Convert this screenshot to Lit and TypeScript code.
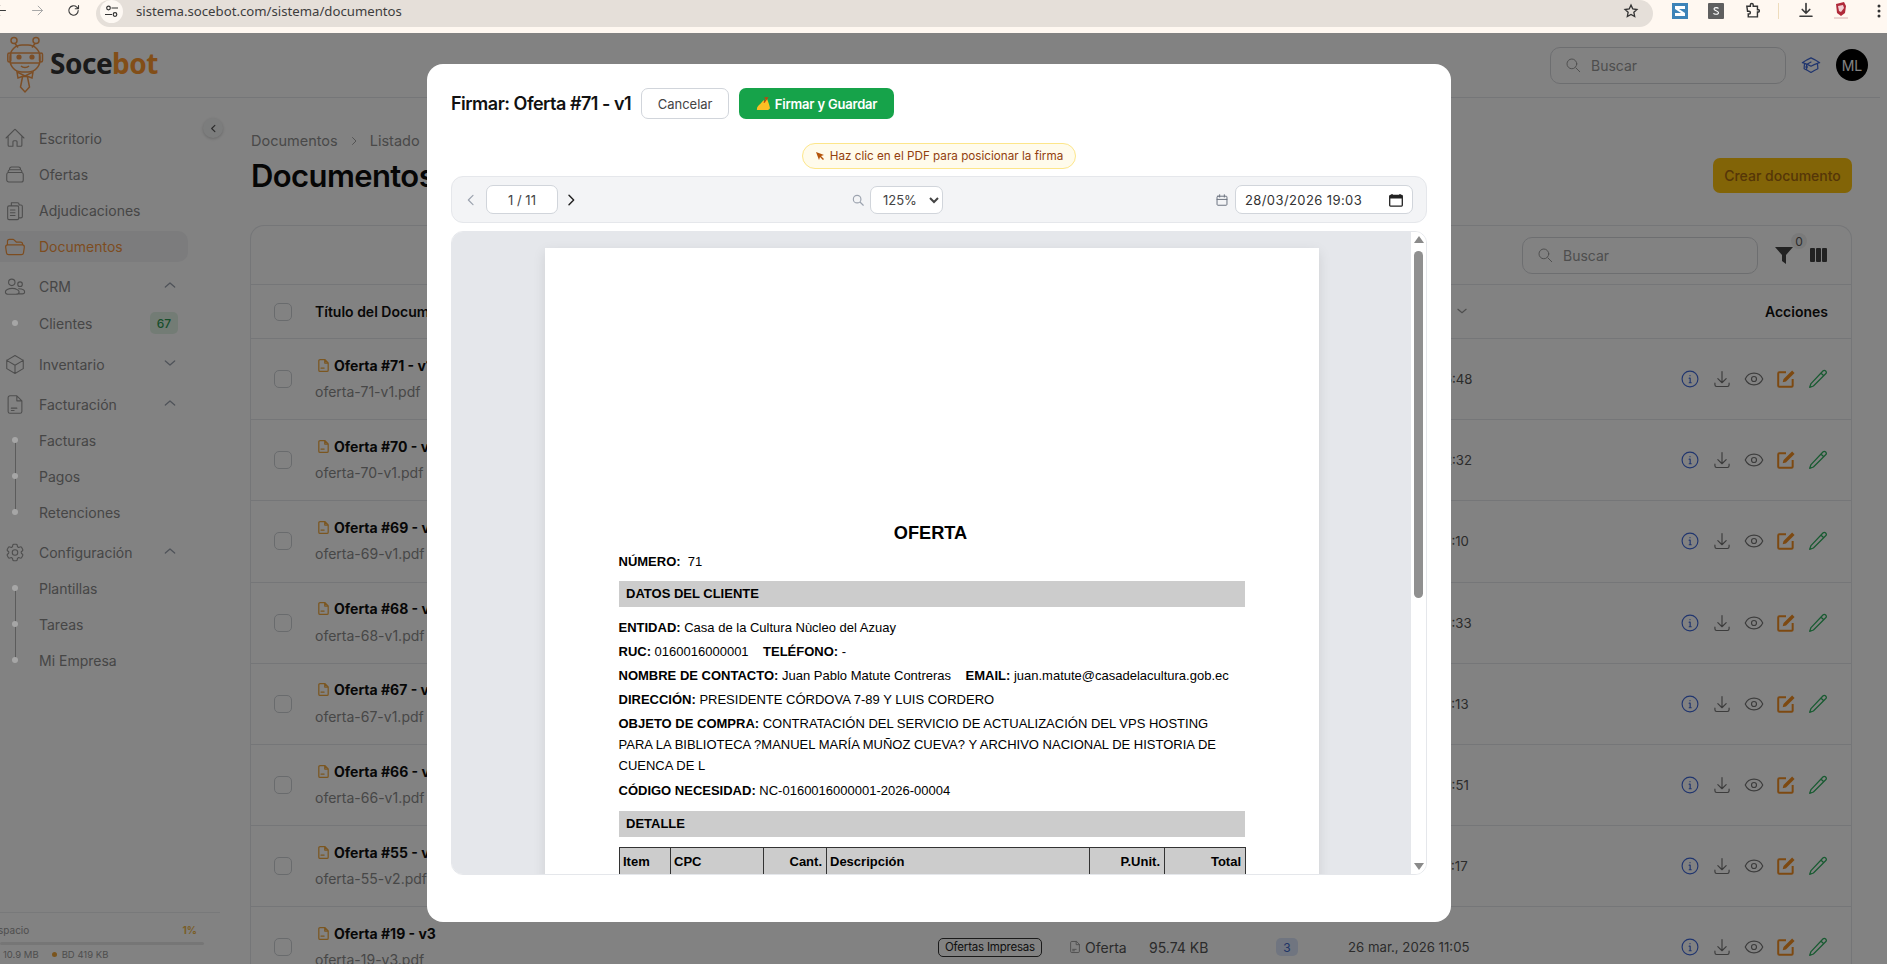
import { LitElement, html, css } from 'lit';
import { customElement } from 'lit/decorators.js';

const ic = (d: string, size = 24, sw = 1.5) => html`<svg width=${size} height=${size} viewBox="0 0 24 24" fill="none" stroke="currentColor" stroke-width=${sw} stroke-linecap="round" stroke-linejoin="round"><path d=${d}></path></svg>`;

const P = {
  home: 'M2.25 12l8.954-8.955c.44-.439 1.152-.439 1.591 0L21.75 12M4.5 9.75v10.125c0 .621.504 1.125 1.125 1.125H9.75v-4.875c0-.621.504-1.125 1.125-1.125h2.25c.621 0 1.125.504 1.125 1.125V21h4.125c.621 0 1.125-.504 1.125-1.125V9.75',
  stack: 'M6 6.878V6a2.25 2.25 0 012.25-2.25h7.5A2.25 2.25 0 0118 6v.878m-12 0c.235-.083.487-.128.75-.128h10.5c.263 0 .515.045.75.128m-12 0A2.25 2.25 0 004.5 9v.878m13.5-3A2.25 2.25 0 0119.5 9v.878m0 0a2.246 2.246 0 00-.75-.128H5.25c-.263 0-.515.045-.75.128m15 0A2.25 2.25 0 0121 12v6a2.25 2.25 0 01-2.25 2.25H5.25A2.25 2.25 0 013 18v-6c0-.98.626-1.813 1.5-2.122',
  clip: 'M8 3.5h6.5a2 2 0 012 2V6h2a1.5 1.5 0 011.5 1.5v11a1.5 1.5 0 01-1.5 1.5H16.5M5.5 7h9A1.5 1.5 0 0116 8.5v12a1.5 1.5 0 01-1.5 1.5h-9A1.5 1.5 0 014 20.500v-12A1.500 1.500 0 015.500 7zM7 11.500h5M7 14.500h5M7 17.500h5M8 3.500v3.500',
  folder: 'M3.75 9.776c.112-.017.227-.026.344-.026h15.812c.117 0 .232.009.344.026m-16.5 0a2.25 2.25 0 00-1.883 2.542l.857 6a2.25 2.25 0 002.227 1.932H19.05a2.25 2.25 0 002.227-1.932l.857-6a2.25 2.25 0 00-1.883-2.542m-16.5 0V6A2.25 2.25 0 016 3.750h3.879a1.500 1.500 0 011.060.440l2.122 2.120a1.500 1.500 0 001.060.440H18A2.250 2.250 0 0120.250 9v.776',
  users: 'M8.500 4a3.500 3.500 0 100 7 3.500 3.500 0 000-7zM17.500 7a2.500 2.500 0 100 5 2.500 2.500 0 000-5zM5.500 20.500h7.500c2 0 3.500-1 3.500-2.500s-3-4-7.500-4-7.500 2-7.500 4 1.500 2.500 4 2.500zM16.500 20h3.500c1.500 0 2.500-.8 2.500-2 0-1.700-2.200-3.500-6.500-3.500',
  cube: 'M21 7.500l-9-5.250L3 7.500m18 0l-9 5.250m9-5.250v9l-9 5.250M3 7.500l9 5.250M3 7.500v9l9 5.250m0-9v9',
  doc: 'M14 2.500H6.500A2 2 0 004.500 4.500v15a2 2 0 002 2h11a2 2 0 002-2V8zM14 2.500V8h5.500M8 16h6M8 18.500h3',
  cog: 'M9.594 3.940c.090-.542.560-.940 1.110-.940h2.593c.550 0 1.020.398 1.110.940l.213 1.281c.063.374.313.686.645.870.074.040.147.083.220.127.324.196.720.257 1.075.124l1.217-.456a1.125 1.125 0 011.370.490l1.296 2.247a1.125 1.125 0 01-.260 1.431l-1.003.827c-.293.240-.438.613-.431.992a6.759 6.759 0 010 .255c-.007.378.138.750.430.990l1.005.828c.424.350.534.954.260 1.430l-1.298 2.247a1.125 1.125 0 01-1.369.491l-1.217-.456c-.355-.133-.750-.072-1.076.124a6.570 6.570 0 01-.220.128c-.331.183-.581.495-.644.869l-.213 1.280c-.090.543-.560.941-1.110.941h-2.594c-.550 0-1.020-.398-1.110-.940l-.213-1.281c-.062-.374-.312-.686-.644-.870a6.520 6.520 0 01-.220-.127c-.325-.196-.720-.257-1.076-.124l-1.217.456a1.125 1.125 0 01-1.369-.490l-1.297-2.247a1.125 1.125 0 01.260-1.431l1.004-.827c.292-.240.437-.613.430-.992a6.932 6.932 0 010-.255c.007-.378-.138-.750-.430-.990l-1.004-.828a1.125 1.125 0 01-.260-1.430l1.297-2.247a1.125 1.125 0 011.370-.491l1.216.456c.356.133.751.072 1.076-.124.072-.044.146-.087.220-.128.332-.183.582-.495.644-.869l.214-1.281zM15 12a3 3 0 11-6 0 3 3 0 016 0z',
  up: 'M5 15l7-6 7 6',
  down: 'M5 9l7 6 7-6',
  left: 'M15 5l-7 7 7 7',
  right: 'M9 5l7 7-7 7',
  search: 'M21 21l-5.200-5.200M17 10.500a6.500 6.500 0 11-13 0 6.500 6.500 0 0113 0z',
  cap: 'M4.260 10.150a60 60 0 00-.490 6.350A48.600 48.600 0 0112 20.900a48.600 48.600 0 018.230-4.400 60 60 0 00-.490-6.350m-15.480 0a50.600 50.600 0 00-2.660-.900A59.900 59.900 0 0112 3.500a59.900 59.900 0 0110.400 5.750c-.900.270-1.780.570-2.660.900m-15.480 0A50.700 50.700 0 0112 13.490a50.700 50.700 0 017.740-3.340M6.750 15a.750.750 0 100-1.500.750.750 0 000 1.500zm0 0v-3.680A55.400 55.400 0 0112 8.440m-5.250 9.060v-1.500',
  info: 'M12 2.500a9.500 9.500 0 100 19 9.500 9.500 0 000-19zM11 11h1.200v5.500M11 16.500h2.500M12 7.800v.2',
  download: 'M12 3v13M7 11.500l5 5 5-5M3.500 17v2a2 2 0 002 2h13a2 2 0 002-2v-2',
  eye: 'M1.500 12C3.500 7.500 7.500 5 12 5s8.500 2.500 10.500 7c-2 4.500-6 7-10.500 7S3.500 16.500 1.500 12zM15 12a3 3 0 11-6 0 3 3 0 016 0z',
  pencil: 'M17.900 2.400a2.300 2.300 0 013.300 3.300L6.500 20.400 2 22l1.600-4.500zM15.500 4.800l3.300 3.300',
  cal: 'M5 5.500h14a1.500 1.500 0 011.500 1.500v12.500A1.500 1.500 0 0119 21H5a1.500 1.500 0 01-1.500-1.500V7A1.500 1.500 0 015 5.500zM8 3v4M16 3v4M3.500 11h17',
  star: 'M12 3.200l2.700 5.700 6.200.800-4.600 4.300 1.200 6.200L12 17.100l-5.500 3.100 1.200-6.200-4.600-4.300 6.200-.800z',
  reload: 'M19.500 12a7.500 7.500 0 11-2.300-5.400L20 9.200M20 4v5.200h-5.200',
};

const DOCS = [
  ['Oferta #71 - v1', 'oferta-71-v1.pdf', '97.21 KB', '1', '28 mar., 2026 15:48'],
  ['Oferta #70 - v1', 'oferta-70-v1.pdf', '96.08 KB', '2', '28 mar., 2026 12:32'],
  ['Oferta #69 - v1', 'oferta-69-v1.pdf', '95.12 KB', '1', '27 mar., 2026 18:10'],
  ['Oferta #68 - v1', 'oferta-68-v1.pdf', '95.40 KB', '2', '27 mar., 2026 16:33'],
  ['Oferta #67 - v1', 'oferta-67-v1.pdf', '96.51 KB', '1', '27 mar., 2026 12:13'],
  ['Oferta #66 - v1', 'oferta-66-v1.pdf', '95.77 KB', '1', '27 mar., 2026 10:51'],
  ['Oferta #55 - v2', 'oferta-55-v2.pdf', '94.90 KB', '2', '26 mar., 2026 17:17'],
  ['Oferta #19 - v3', 'oferta-19-v3.pdf', '95.74 KB', '3', '26 mar., 2026 11:05'],
];

@customElement('app-root')
export class AppRoot extends LitElement {
  static styles = css`
    :host { display: block; width: 1887px; height: 964px; overflow: hidden; font-family: Inter, sans-serif; color: #111; background: #fff; }
    .chrome { height: 33px; background: #fff8f1; display: flex; align-items: flex-start; color: #3b3b3b; }
    .chrome .nav-ic { display: flex; align-items: center; height: 21px; }
    .url { margin-left: 15px; width: 1557px; height: 27px; background: #e5dfd9; border-radius: 0 14px 14px 14px; border-top-left-radius: 14px; display: flex; align-items: center; padding-left: 4px; box-sizing: border-box; }
    .url .tune { width: 23px; height: 23px; border-radius: 50%; background: #fdf8f3; display: flex; align-items: center; justify-content: center; margin-top: -4px; }
    .url span { margin-left: 9px; font: 13.2px 'Noto Sans', sans-serif; color: #3d3d3d; margin-top: -5px; padding-left: 4px; }
    .url .grow { flex: 1; }
    .url svg.st { margin-right: 14px; margin-top: -5px; }
    .ext { display: flex; align-items: center; height: 21px; }
    .ext-s { width: 16px; height: 16px; }
    .app { position: relative; display: flex; height: 931px; overflow: hidden; }
    .overlay { position: absolute; inset: 0; background: rgba(0,0,0,.49); padding: 31px 0 0 427px; }

    aside { width: 250px; flex: none; height: 931px; display: flex; flex-direction: column; overflow: hidden; position: relative; }
    .logo { height: 65px; flex: none; box-sizing: border-box; border-bottom: 1px solid #e5e7eb; display: flex; align-items: flex-start; position: relative; }
    .logo svg { margin: 3px 0 0 7px; }
    .logo b { font: 700 28px/38px 'Noto Sans', sans-serif; letter-spacing: -.5px; margin: 11px 0 0 3px; color: #333; }
    .logo b i { font-style: normal; color: #ff9a30; }
    nav { padding-top: 22px; display: flex; flex-direction: column; }
    .item { height: 36px; display: flex; align-items: center; font-size: 14px; color: #8a8a8a; padding-left: 4px; width: 188px; box-sizing: border-box; position: relative; }
    .item .i { width: 22px; height: 24px; display: flex; justify-content: center; align-items: center; margin-right: 13px; color: #999; }
    .item.act { color: #f6963f; background: #f3f4f6; border-radius: 0 10px 10px 0; height: 31px; margin: 3px 0 2px; }
    .item.act .i { color: #f6963f; }
    .item .chev { position: absolute; right: 10px; top: 9px; color: #9ca3af; }
    .group { margin-top: 4px; }
    .sub { position: relative; }
    .sub .item .dot { width: 6px; height: 6px; border-radius: 50%; background: #a6a6a6; margin: 0 21px 0 8px; flex: none; z-index: 1; }
    .sub.line::before { content: ''; position: absolute; left: 15px; top: 18px; bottom: 18px; width: 1px; background: #b5b5b5; }
    .badge67 { position: absolute; right: 10px; top: 7px; height: 22px; width: 28px; border-radius: 5px; background: #e2f4e6; color: #2f9a55; font-size: 12px; font-weight: 500; display: flex; align-items: center; justify-content: center; }
    .collapse { position: absolute; left: 203px; top: 85px; width: 20px; height: 20px; border-radius: 50%; background: #f4f5f6; box-shadow: 0 1px 3px rgba(0,0,0,.2); display: flex; align-items: center; justify-content: center; color: #555; }
    .storage { margin-top: auto; height: 52px; flex: none; width: 220px; border-top: 1px solid #eceef0; box-sizing: border-box; padding-top: 11px; overflow: hidden; font-size: 10px; color: #9a9a9a; }
    .storage .r { display: flex; justify-content: space-between; width: 205px; margin-left: -8px; box-sizing: border-box; padding-left: 0; }
    .storage .r b { color: #f0b84a; font-weight: 700; }
    .storage .bar { height: 3px; width: 204px; background: #e8e8e8; margin-top: 6px; border-radius: 2px; }
    .storage .s { display: flex; align-items: center; margin-top: 4px; padding-left: 3px; color: #999; font-size: 9.5px; }
    .storage .s i { width: 5px; height: 5px; border-radius: 50%; background: #f0a63a; margin: 0 5px 0 13px; }

    main { flex: 1; display: flex; flex-direction: column; padding-right: 35px; min-width: 0; }
    .top { height: 65px; flex: none; box-sizing: border-box; border-bottom: 1px solid #e5e7eb; display: flex; align-items: center; justify-content: flex-end; margin-right: -28px; padding-right: 12px; }
    .search { width: 236px; height: 37px; border: 1px solid #d6d8dc; border-radius: 10px; box-sizing: border-box; display: flex; align-items: center; padding-left: 13px; color: #9a9a9a; font-size: 14px; gap: 9px; }
    .top .cap { margin: 0 0 0 15px; color: #3f68d8; display: flex; }
    .avatar { width: 32px; height: 32px; border-radius: 50%; background: #000; color: #fff; font-size: 14px; display: flex; align-items: center; justify-content: center; margin-left: 15px; }
    .crumb { margin-top: 34px; font-size: 14.5px; color: #8f8f8f; display: flex; align-items: center; gap: 10px; height: 20px; margin-left: 1px; }
    .head { display: flex; justify-content: space-between; align-items: center; margin-top: 8px; height: 44px; margin-left: 1px; }
    h1 { margin: 0; font-size: 31px; font-weight: 600; letter-spacing: -.6px; color: #0d0d0d; }
    .create { height: 35px; width: 139px; border-radius: 7px; background: #ffc40f; color: #a86a10; font-size: 14px; font-weight: 500; display: flex; align-items: center; justify-content: center; }
    .card { margin-top: 31px; border: 1px solid #e5e7eb; border-bottom: 0; border-radius: 14px 14px 0 0; }
    .tools { height: 59px; box-sizing: border-box; display: flex; align-items: center; justify-content: flex-end; border-bottom: 1px solid #e5e7eb; padding-right: 24px; position: relative; }
    .tools .fil { margin-left: 17px; color: #444; display: flex; }
    .tools .cols { margin-left: 17px; display: flex; gap: 1px; }
    .tools .cols i { width: 5px; height: 14px; background: #444; border-radius: 1px; }
    .tools .zero { position: absolute; right: 44px; top: 7px; width: 16px; height: 16px; border-radius: 50%; background: #f0f0f0; color: #555; font-size: 12px; display: flex; align-items: center; justify-content: center; }
    .row { display: grid; grid-template-columns: 64px 623px 130px 81px 125px 74px 1fr auto; align-items: center; border-bottom: 1px solid #e5e7eb; height: 81.200px; box-sizing: border-box; font-size: 14px; color: #6b6b6b; }
    .row.hd { height: 54px; color: #111; font-weight: 600; font-size: 14px; }
    .cb { width: 18px; height: 18px; border: 1px solid #cfd2d6; border-radius: 5px; box-sizing: border-box; margin-left: 23px; background: #fff; }
    .ttl { display: flex; align-items: center; gap: 3px; color: #0e0e0e; font-weight: 700; font-size: 14px; height: 20px; padding-left: 1px; }
    .ttl svg { color: #f2a93f; }
    .fn { color: #8c8c8c; margin-top: 7px; height: 20px; font-size: 14px; line-height: 20px; }
    .cell-t { margin-top: -1px; }
    .tag { justify-self: start; border: 1px solid #333; border-radius: 5px; color: #222; font-size: 11.5px; height: 17px; padding: 0 6px; display: flex; align-items: center; letter-spacing: -.2px; }
    .type { display: flex; align-items: center; gap: 3px; color: #555; }
    .type svg { color: #999; }
    .size { color: #555; }
    .count { width: 22px; height: 18px; background: #dbe6fb; color: #3e68c8; border-radius: 5px; font-size: 12px; display: flex; align-items: center; justify-content: center; margin-left: 2px; }
    .date { color: #555; font-size: 13.2px; }
    .acts { display: flex; gap: 12px; padding-right: 23px; align-items: center; }
    .hd .acts { justify-self: end; font-weight: 600; color: #111; gap: 0; }
    .c-i { color: #3f68d8; display: flex; }
    .c-d, .c-e { color: #777; display: flex; }
    .c-o { color: #f59023; display: flex; }
    .c-g { color: #2fb160; display: flex; }

    .modal { width: 1024px; height: 858px; background: #fff; border-radius: 16px; box-sizing: border-box; padding: 24px 24px 0; display: flex; flex-direction: column; }
    .m-h { display: flex; align-items: center; height: 31px; gap: 10px; }
    .m-h h2 { margin: 0; font-size: 18px; font-weight: 600; letter-spacing: -.5px; color: #111; }
    .btn { height: 31px; border-radius: 7px; box-sizing: border-box; font-size: 13px; display: flex; align-items: center; justify-content: center; }
    .cancel { width: 88px; border: 1px solid #d1d5db; color: #444; }
    .save { width: 155px; background: #16a34a; color: #fff; font-weight: 600; gap: 4px; letter-spacing: -.2px; }
    .hint-w { display: flex; justify-content: center; margin-top: 24px; height: 26px; }
    .hint { background: #fffbeb; border: 1px solid #fde68a; border-radius: 13px; box-sizing: border-box; height: 26px; width: 274px; display: flex; align-items: center; justify-content: center; gap: 5px; font-size: 11.700px; color: #92400e; }
    .pt { margin-top: 7px; height: 47px; background: #f3f4f6; border: 1px solid #e5e7eb; border-radius: 12px; box-sizing: border-box; display: flex; align-items: center; justify-content: space-between; padding: 0 13px 0 11px; }
    .pt .g { display: flex; align-items: center; }
    .pg { width: 72px; height: 29px; background: #fff; border: 1px solid #d1d5db; border-radius: 7px; box-sizing: border-box; display: flex; align-items: center; justify-content: center; font-size: 13px; color: #444; margin: 0 5px 0 7px; }
    select { width: 73px; height: 28px; border: 1px solid #d1d5db; border-radius: 7px; background: #fff; font: 13px Inter, sans-serif; color: #444; margin-left: 5px; padding-left: 8px; }
    .dt { width: 178px; height: 29px; background: #fff; border: 1px solid #d1d5db; border-radius: 7px; box-sizing: border-box; display: flex; align-items: center; justify-content: space-between; padding: 0 9px; font-size: 13px; letter-spacing: .4px; color: #333; margin-left: 6px; }
    .pdf { margin-top: 8px; height: 644px; flex: none; border: 1px solid #e5e7eb; border-radius: 12px; overflow: hidden; display: flex; box-sizing: border-box; }
    .scroll { flex: 1; background: #e5e7eb; overflow: hidden; padding-top: 16px; display: flex; justify-content: center; }
    .sb { width: 15px; background: #fff; display: flex; flex-direction: column; align-items: center; padding: 4px 0; box-sizing: border-box; flex: none; }
    .sb .th { width: 9px; height: 347px; background: #909090; border-radius: 5px; margin-top: 8px; }
    .sb .ar { width: 0; height: 0; border-left: 5px solid transparent; border-right: 5px solid transparent; }
    .sb .ar.u { border-bottom: 7px solid #8a8a8a; }
    .sb .ar.d { border-top: 7px solid #8a8a8a; margin-top: auto; }
    .page { width: 774px; height: 1000px; flex: none; background: #fff; box-sizing: border-box; padding: 274px 74px 0; font: 13px/18px 'Liberation Sans', Arial, sans-serif; color: #000; box-shadow: 0 4px 12px rgba(0,0,0,.1); }
    .page h3 { margin: 0; font-size: 18.200px; line-height: 22px; text-align: center; font-weight: 700; padding-right: 2px; }
    .page p { margin: 0; white-space: nowrap; }
    .page .num { margin-top: 9px; line-height: 18px; }
    .sec { background: #ccc; height: 26px; line-height: 26px; font-weight: 700; padding-left: 7.500px; }
    .sec.a { margin-top: 10px; }
    .lines { margin-top: 12px; display: flex; flex-direction: column; gap: 6px; }
    .obj { line-height: 21px; margin-top: -2px; }
    .sec.b { margin-top: 11px; }
    .sec + table { margin-top: 10px; }
    table { border-collapse: collapse; width: 626px; table-layout: fixed; font-weight: 700; background: #ccc; }
    td { border: 1px solid #333; height: 28px; padding: 0 3.500px; box-sizing: border-box; }
    td.r { text-align: right; }
  `;

  renderLogo() {
    return html`<svg width="40" height="58" viewBox="0 0 40 58" fill="none" stroke="#f49a4c" stroke-width="1.500">
      <circle cx="7" cy="4.500" r="3"></circle><circle cx="29" cy="4.500" r="3"></circle>
      <path d="M8 7.500l3 4M28 7.500l-3 4"></path>
      <rect x="3" y="9" width="30" height="27" rx="12"></rect>
      <rect x="0.800" y="17" width="3" height="9" rx="1.500"></rect><rect x="32.500" y="17" width="3" height="9" rx="1.500"></rect>
      <path d="M4 17h28M4 27h28"></path>
      <circle cx="12" cy="21" r="2.600" fill="#f49a4c" stroke="none"></circle><circle cx="25" cy="21" r="2.600" fill="#f49a4c" stroke="none"></circle>
      <path d="M14 30c2 2 6 2 8 0"></path>
      <path d="M10 36l8 4 8-4-1 6-4-1.500h-6L11 42zM15.500 41l-2 10 4.500 5 4.500-5-2-10"></path>
    </svg>`;
  }

  renderHand() {
    return html`<svg width="15" height="14" viewBox="0 0 16 15"><path d="M1 14c-.5-3 1.500-5 3.500-6.500L8 3.500l1.500 1 1-2.500 1.500.500L14 8l1 4-2 2z" fill="#fbbf24"></path><path d="M9 1l3 0-3.500 5" stroke="#c2410c" stroke-width="1.400" fill="none"></path></svg>`;
  }

  renderRow(d: string[]) {
    return html`<div class="row">
      <div class="cb"></div>
      <div class="cell-t">
        <div class="ttl">${ic('M14 2.500H6.500a2 2 0 00-2 2v15a2 2 0 002 2h11a2 2 0 002-2V8zM14 2.500V8h5.500M8 16h5', 15, 2)}${d[0]}</div>
        <div class="fn">${d[1]}</div>
      </div>
      <div class="tag">Ofertas Impresas</div>
      <div class="type">${ic(P.doc, 14, 1.600)}Oferta</div>
      <div class="size">${d[2]}</div>
      <div class="count">${d[3]}</div>
      <div class="date">${d[4]}</div>
      <div class="acts">
        <span class="c-i">${ic(P.info, 20, 1.400)}</span>
        <span class="c-d">${ic(P.download, 20, 1.400)}</span>
        <span class="c-e">${ic(P.eye, 20, 1.400)}</span>
        <span class="c-o"><svg width="20" height="20" viewBox="0 0 18 18" fill="none"><path d="M9 3H3a1 1 0 00-1 1v11a1 1 0 001 1h11a1 1 0 001-1V9" stroke="currentColor" stroke-width="1.800"></path><path d="M6 12l.800-3L14.500 1.300l2.200 2.200L9 11.200z" fill="currentColor"></path></svg></span>
        <span class="c-g">${ic(P.pencil, 20, 1.500)}</span>
      </div>
    </div>`;
  }

  render() {
    const sub = (t: string) => html`<div class="item"><i class="dot"></i>${t}</div>`;
    return html`
      <div class="chrome">
        <span class="nav-ic" style="margin-left:-7px">${ic('M20 12H4M11 5l-7 7 7 7', 15, 1.600)}</span>
        <span class="nav-ic" style="margin-left:22px;color:#a8a8a8">${ic('M4 12h16M13 5l7 7-7 7', 15, 1.600)}</span>
        <span class="nav-ic" style="margin-left:21px">${ic(P.reload, 15, 1.800)}</span>
        <div class="url">
          <div class="tune"><svg width="13" height="13" viewBox="0 0 13 13" fill="none" stroke="#333" stroke-width="1.200"><circle cx="3.500" cy="3" r="1.800"></circle><path d="M6.500 3H13M0 9.500h7"></path><circle cx="10" cy="9.500" r="1.800"></circle></svg></div>
          <span>sistema.socebot.com/sistema/documentos</span>
          <div class="grow"></div>
          <svg class="st" width="16" height="16" viewBox="0 0 24 24" fill="none" stroke="#333" stroke-width="2"><path d=${P.star}></path></svg>
        </div>
        <div class="ext" style="margin-left:19px"><svg class="ext-s" viewBox="0 0 16 16"><rect width="16" height="16" fill="#3d83b8"></rect><path d="M3 3h10v3H7l6 4v3H3v-3h6L3 6z" fill="#fff"></path></svg></div>
        <div class="ext" style="margin-left:20px"><svg class="ext-s" viewBox="0 0 16 16"><rect width="16" height="16" rx="1" fill="#5f5f5f"></rect><path d="M10.500 5.500C10 4.500 6 4 6 6c0 2 4.500 1.500 4.500 3.800 0 2-4.500 1.800-5 .500" stroke="#fff" stroke-width="1.100" fill="none"></path></svg></div>
        <div class="ext" style="margin-left:20px"><svg width="17" height="17" viewBox="0 0 24 24" fill="none" stroke="#333" stroke-width="2"><path d="M4 6h5V4a2 2 0 014 0v2h6v5h2a2 2 0 010 3h-2v7H6v-4h1a2 2 0 000-4H5z"></path></svg></div>
        <div class="ext" style="margin-left:17px"><i style="width:1px;height:16px;background:#eedcbc;display:block"></i></div>
        <div class="ext" style="margin-left:18px">${ic('M12 2v13M7 10l5 5 5-5M4 19h16', 18, 2.200)}</div>
        <div class="ext" style="margin-left:17px"><svg width="18" height="19" viewBox="0 0 18 19"><path d="M4 3l8-2 2 4-1 7-4 3-4-3z" fill="#b02a3a"></path><path d="M6 5l5-1 1 3-3 4-2-1z" fill="#f2d0d4"></path><path d="M2 17h14" stroke="#d8b0b0" stroke-width="1"></path></svg></div>
        <div class="ext" style="margin-left:27px"><svg width="4" height="14" viewBox="0 0 4 14" fill="#333"><circle cx="2" cy="2" r="1.500"></circle><circle cx="2" cy="7" r="1.500"></circle><circle cx="2" cy="12" r="1.500"></circle></svg></div>
      </div>
      <div class="app">
        <aside>
          <div class="logo">${this.renderLogo()}<b>Soce<i>bot</i></b></div>
          <div class="collapse">${ic(P.left, 11, 2.500)}</div>
          <nav>
            <div class="item"><span class="i">${ic(P.home, 22, 1.200)}</span>Escritorio</div>
            <div class="item"><span class="i">${ic(P.stack, 23, 1.200)}</span>Ofertas</div>
            <div class="item"><span class="i">${ic(P.clip, 23, 1.200)}</span>Adjudicaciones</div>
            <div class="item act"><span class="i">${ic(P.folder, 24, 1.300)}</span>Documentos</div>
            <div class="group"><div class="item"><span class="i">${ic(P.users, 23, 1.200)}</span>CRM<span class="chev">${ic(P.up, 16, 2)}</span></div>
              <div class="sub" style="margin:1px 0"><div class="item"><i class="dot"></i>Clientes<span class="badge67">67</span></div></div></div>
            <div class="group"><div class="item"><span class="i">${ic(P.cube, 23, 1.200)}</span>Inventario<span class="chev">${ic(P.down, 16, 2)}</span></div></div>
            <div class="group"><div class="item"><span class="i">${ic(P.doc, 23, 1.200)}</span>Facturación<span class="chev">${ic(P.up, 16, 2)}</span></div>
              <div class="sub line">${sub('Facturas')}${sub('Pagos')}${sub('Retenciones')}</div></div>
            <div class="group"><div class="item"><span class="i">${ic(P.cog, 23, 1.200)}</span>Configuración<span class="chev">${ic(P.up, 16, 2)}</span></div>
              <div class="sub line">${sub('Plantillas')}${sub('Tareas')}${sub('Mi Empresa')}</div></div>
          </nav>
          <div class="storage">
            <div class="r"><span>Espacio</span><b>1%</b></div>
            <div class="bar"></div>
            <div class="s">10.9 MB<i></i>BD 419 KB</div>
          </div>
        </aside>
        <main>
          <div class="top">
            <div class="search">${ic(P.search, 18, 1.300)}Buscar</div>
            <span class="cap">${ic(P.cap, 20, 1.500)}</span>
            <div class="avatar">ML</div>
          </div>
          <div class="crumb">Documentos ${ic(P.right, 12, 1.600)} Listado</div>
          <div class="head"><h1>Documentos</h1><div class="create">Crear documento</div></div>
          <div class="card">
            <div class="tools">
              <div class="search">${ic(P.search, 18, 1.300)}Buscar</div>
              <span class="fil"><svg width="18" height="18" viewBox="0 0 18 18" fill="currentColor"><path d="M0 1h18l-7 8v9l-4-3V9z"></path></svg></span>
              <span class="zero">0</span>
              <span class="cols"><i></i><i></i><i></i></span>
            </div>
            <div class="row hd">
              <div class="cb"></div><div>Título del Documento</div><div></div><div></div><div></div><div></div>
              <div style="position:relative">Fecha<span style="position:absolute;left:107px;top:1px;color:#999">${ic(P.down, 14, 2)}</span></div>
              <div class="acts">Acciones</div>
            </div>
            ${DOCS.map((d) => this.renderRow(d))}
          </div>
        </main>
        <div class="overlay">
          <div class="modal">
            <div class="m-h">
              <h2>Firmar: Oferta #71 - v1</h2>
              <div class="btn cancel">Cancelar</div>
              <div class="btn save">${this.renderHand()}Firmar y Guardar</div>
            </div>
            <div class="hint-w"><div class="hint"><svg width="10" height="10" viewBox="0 0 10 10" fill="#b45309"><path d="M1 1l8 3-3 1 3 3-1 1-3-3-1 3z"></path></svg>Haz clic en el PDF para posicionar la firma</div></div>
            <div class="pt">
              <div class="g">
                <span style="color:#9ca3af;display:flex">${ic(P.left, 16, 1.800)}</span>
                <div class="pg">1 / 11</div>
                <span style="color:#222;display:flex">${ic(P.right, 16, 2.200)}</span>
              </div>
              <div class="g">
                <span style="color:#9ca3af;display:flex">${ic(P.search, 14, 2)}</span>
                <select><option>125%</option><option>100%</option><option>150%</option></select>
              </div>
              <div class="g">
                <span style="color:#6b7280;display:flex">${ic(P.cal, 14, 1.700)}</span>
                <div class="dt">28/03/2026 19:03<svg width="14" height="14" viewBox="0 0 14 14"><path d="M1.500 2.500h11a.8.8 0 01.800.8v9a.8.8 0 01-.800.8h-11a.8.8 0 01-.800-.8v-9a.8.8 0 01.800-.8zM3 1v2M11 1v2" stroke="#222" stroke-width="1.300" fill="none"></path><rect x="1" y="3" width="12" height="2.500" fill="#222"></rect></svg></div>
              </div>
            </div>
            <div class="pdf">
              <div class="scroll">
                <div class="page">
                  <h3>OFERTA</h3>
                  <p class="num"><b>NÚMERO:</b>&nbsp; 71</p>
                  <div class="sec a">DATOS DEL CLIENTE</div>
                  <div class="lines">
                    <p><b>ENTIDAD:</b> Casa de la Cultura Nùcleo del Azuay</p>
                    <p><b>RUC:</b> 0160016000001 &nbsp;&nbsp; <b>TELÉFONO:</b> -</p>
                    <p><b>NOMBRE DE CONTACTO:</b> Juan Pablo Matute Contreras &nbsp;&nbsp; <b>EMAIL:</b> juan.matute@casadelacultura.gob.ec</p>
                    <p><b>DIRECCIÓN:</b> PRESIDENTE CÓRDOVA 7-89 Y LUIS CORDERO</p>
                    <div class="obj"><p><b>OBJETO DE COMPRA:</b> CONTRATACIÓN DEL SERVICIO DE ACTUALIZACIÓN DEL VPS HOSTING</p><p>PARA LA BIBLIOTECA ?MANUEL MARÍA MUÑOZ CUEVA? Y ARCHIVO NACIONAL DE HISTORIA DE</p><p>CUENCA DE L</p></div>
                    <p><b>CÓDIGO NECESIDAD:</b> NC-0160016000001-2026-00004</p>
                  </div>
                  <div class="sec b">DETALLE</div>
                  <table>
                    <colgroup><col style="width:51px"><col style="width:93px"><col style="width:63px"><col style="width:263px"><col style="width:75px"><col style="width:81px"></colgroup>
                    <tr><td>Item</td><td>CPC</td><td class="r">Cant.</td><td>Descripción</td><td class="r">P.Unit.</td><td class="r">Total</td></tr>
                  </table>
                </div>
              </div>
              <div class="sb"><i class="ar u"></i><i class="th"></i><i class="ar d"></i></div>
            </div>
          </div>
        </div>
      </div>
    `;
  }
}
